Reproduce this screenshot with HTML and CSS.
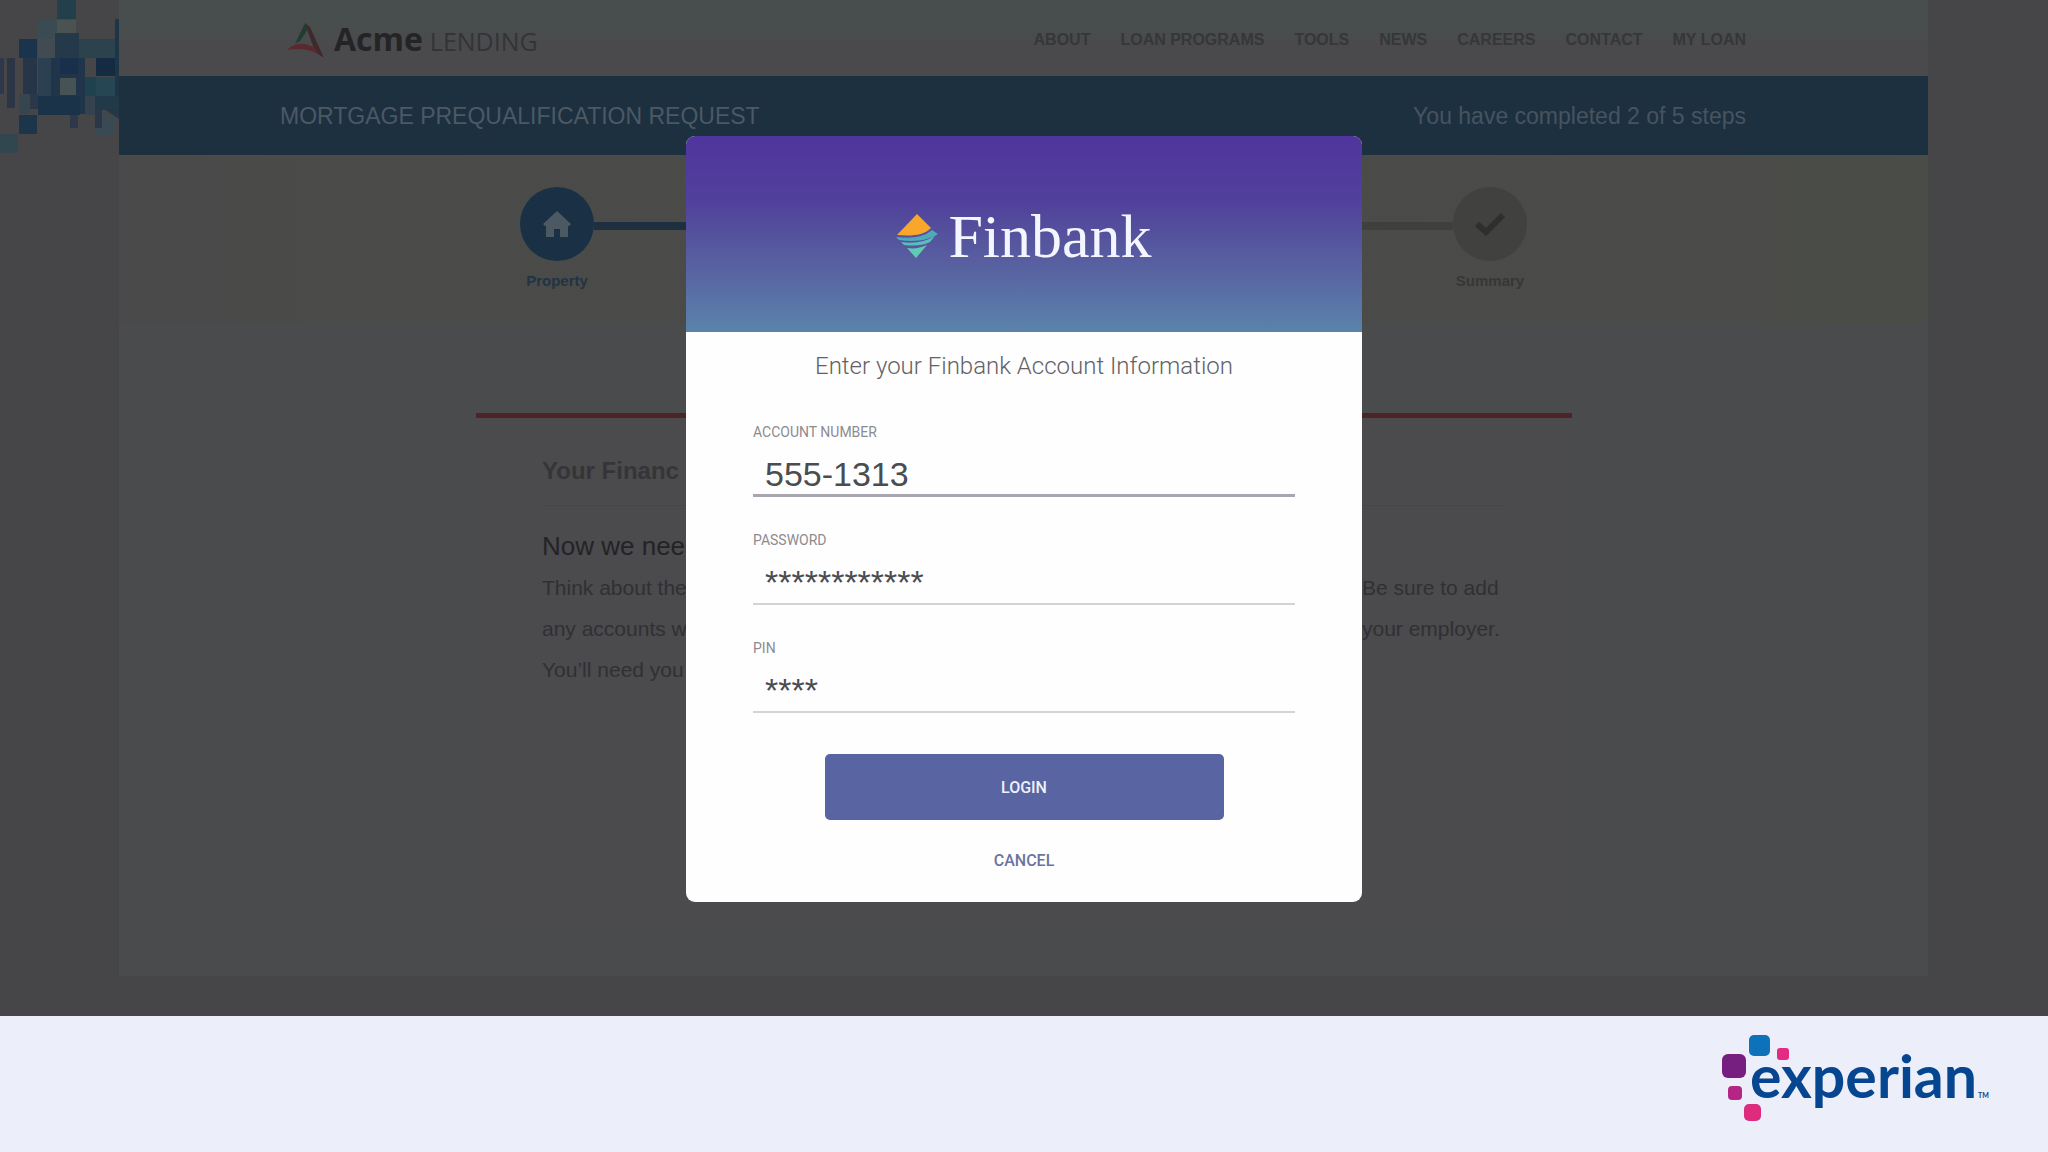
FILE: index.html
```html
<!DOCTYPE html>
<html lang="en">
<head>
    <meta charset="UTF-8">
    <meta name="viewport" content="width=device-width, initial-scale=1.0">
    <title>Acme Lending - Mortgage Prequalification</title>
    <link rel="stylesheet" href="styles.css">
</head>
<body>
    <main class="stage">
        <svg class="mosaic" viewBox="0 0 119 156" aria-hidden="true">
            <rect x="57" y="0" width="19" height="19" fill="#233f4b"/>
            <rect x="38" y="19" width="20" height="20" fill="#3a4c52"/>
            <rect x="38" y="39" width="17" height="19" fill="#414b51"/>
            <rect x="57" y="20" width="19" height="13" fill="#4b5352"/>
            <rect x="55" y="33" width="24" height="25" fill="#24394a"/>
            <rect x="79" y="39" width="36" height="19" fill="#2c434e"/>
            <rect x="115" y="19" width="4" height="77" fill="#1c3547"/>
            <rect x="19" y="39" width="18" height="19" fill="#1b344d"/>
            <rect x="0" y="58" width="4" height="36" fill="#30374a"/>
            <rect x="7" y="58" width="8" height="50" fill="#2c3546"/>
            <rect x="23" y="58" width="14" height="36" fill="#263648"/>
            <rect x="30" y="94" width="8" height="15" fill="#2a3849"/>
            <rect x="19" y="94" width="11" height="20" fill="#37464e"/>
            <rect x="38" y="58" width="13" height="38" fill="#2c4051"/>
            <rect x="51" y="58" width="34" height="56" fill="#20344a"/>
            <rect x="60" y="58" width="18" height="16" fill="#19304d"/>
            <rect x="60" y="78" width="16" height="17" fill="#465253"/>
            <rect x="38" y="96" width="42" height="19" fill="#1a3349"/>
            <rect x="96" y="58" width="19" height="18" fill="#142b42"/>
            <rect x="85" y="77" width="11" height="19" fill="#20424f"/>
            <rect x="96" y="77" width="19" height="19" fill="#264654"/>
            <rect x="85" y="96" width="10" height="19" fill="#34434f"/>
            <rect x="95" y="96" width="24" height="14" fill="#22394a"/>
            <rect x="95" y="110" width="7" height="18" fill="#2b3748"/>
            <path d="M102 110l7 7h7v12l-6 6H96v-7h6z" fill="#3a4a53"/>
            <path d="M104 109h15v10z" fill="#223847"/>
            <rect x="70" y="115" width="8" height="13" fill="#2d3849"/>
            <rect x="19" y="115" width="18" height="19" fill="#1c354a"/>
            <rect x="0" y="134" width="18" height="19" fill="#31464f"/>
        </svg>

        <div class="sheet">
            <header class="site-header">
                <a class="brand" href="#">
                    <svg class="brand-mark" viewBox="0 0 37 34" aria-hidden="true">
                        <path d="M18 0L8 21l5-3 8-12z" fill="#1f3d31"/>
                        <path d="M18 0l5 4 14 31-9-6z" fill="#40292c"/>
                        <path d="M0 27c7-7 17-9 29-1l2 5c-9-5-18-6-31-4z" fill="#5a2930"/>
                    </svg>
                    <span class="brand-name">Acme</span>
                    <span class="brand-sub">LENDING</span>
                </a>
                <nav class="site-nav">
                    <a href="#">ABOUT</a>
                    <a href="#">LOAN PROGRAMS</a>
                    <a href="#">TOOLS</a>
                    <a href="#">NEWS</a>
                    <a href="#">CAREERS</a>
                    <a href="#">CONTACT</a>
                    <a href="#">MY LOAN</a>
                </nav>
            </header>

            <div class="request-bar">
                <h1>MORTGAGE PREQUALIFICATION REQUEST</h1>
                <p>You have completed 2 of 5 steps</p>
            </div>

            <section class="progress">
                <div class="step done">
                    <span class="step-icon">
                        <svg width="28" height="28" viewBox="0 0 28 28" aria-hidden="true">
                            <path d="M14 1L0 14l2 2h1v11h8v-8h6v8h8V16h1l2-2z" fill="#4c5862"/>
                        </svg>
                    </span>
                    <span class="step-label">Property</span>
                </div>
                <span class="step-line done"></span>
                <span class="step-line"></span>
                <div class="step">
                    <span class="step-icon">
                        <svg width="32" height="24" viewBox="0 0 32 24" aria-hidden="true">
                            <path d="M3 12l9 8L29 3" fill="none" stroke="#2e2f2e" stroke-width="6"/>
                        </svg>
                    </span>
                    <span class="step-label">Summary</span>
                </div>
            </section>

            <section class="card">
                <h2>Your Financ</h2>
                <h3>Now we nee</h3>
                <div class="card-text">
                    <p>Think about the</p>
                    <p>Be sure to add</p>
                    <p>any accounts w</p>
                    <p>your employer.</p>
                    <p>You’ll need you</p>
                </div>
            </section>
        </div>

        <div class="overlay">
            <form class="modal" role="dialog" aria-labelledby="modal-title">
                <div class="modal-header">
                    <svg class="finbank-mark" viewBox="0 0 42 44" aria-hidden="true">
                        <path d="M21 0l14 14c-8 8-20 8-34 7z" fill="#f9a72b"/>
                        <path d="M0 23c16 2 28 0 36-7l6 4c-10 7-24 8-39 6z" fill="#4fa9bd"/>
                        <path d="M5 28c13 2 24 0 34-6l-5 6c-8 4-16 4-26 3z" fill="#5bbcbc"/>
                        <path d="M11 34c8 1 13 0 20-3L20 44z" fill="#5fcbb0"/>
                    </svg>
                    <span class="finbank-name">Finbank</span>
                </div>
                <div class="modal-body">
                    <h2 class="modal-title" id="modal-title">Enter your Finbank Account Information</h2>

                    <div class="field active">
                        <label for="account">ACCOUNT NUMBER</label>
                        <input type="text" id="account" value="555-1313">
                    </div>
                    <div class="field">
                        <label for="password">PASSWORD</label>
                        <input type="text" id="password" value="************">
                    </div>
                    <div class="field">
                        <label for="pin">PIN</label>
                        <input type="text" id="pin" value="****">
                    </div>

                    <button type="submit" class="login">LOGIN</button>
                    <button type="button" class="cancel">CANCEL</button>
                </div>
            </form>
        </div>
    </main>

    <footer class="page-footer">
        <svg class="experian" width="270" height="92" viewBox="0 0 270 92" role="img" aria-label="experian">
            <rect x="27" y="3" width="21" height="21" rx="5" fill="#0e72ba"/>
            <rect x="55" y="16" width="12" height="12" rx="3" fill="#e32b84"/>
            <rect x="0" y="22" width="24" height="24" rx="6" fill="#761f81"/>
            <rect x="6" y="54" width="14" height="14" rx="4" fill="#b52586"/>
            <rect x="22" y="72" width="17" height="17" rx="5" fill="#de2b80"/>
            <text class="experian-name" x="28" y="66">experian</text>
            <text class="experian-tm" x="256" y="66">TM</text>
        </svg>
    </footer>
</body>
</html>
```
FILE: styles.css
```css
* {
    box-sizing: border-box;
}
body {
    margin: 0;
    min-height: 100vh;
    display: flex;
    flex-direction: column;
    font-family: "Liberation Sans", Arial, sans-serif;
    background-color: #eceefa;
}
h1, h2, h3, p {
    margin: 0;
    font-weight: normal;
}
a {
    color: inherit;
    text-decoration: none;
}
.stage {
    position: relative;
    flex: 1;
    display: flex;
    align-items: flex-start;
    padding: 0 120px 40px 0;
    background-color: #464649;
}
.mosaic {
    width: 119px;
    height: 156px;
    flex: none;
}

/* Lending site behind the dialog */
.sheet {
    flex: 1;
    align-self: stretch;
    background-color: #4a4b4d;
}
.site-header {
    height: 76px;
    display: flex;
    align-items: center;
    justify-content: space-between;
    padding: 4px 182px 0 168px;
    background: linear-gradient(#474f4d 0, #484e4d 24px, #4a4a4c 44px);
}
.brand {
    display: flex;
    align-items: baseline;
    gap: 7px;
    font-family: "Open Sans", sans-serif;
    line-height: 40px;
}
.brand-mark {
    width: 37px;
    height: 34px;
    align-self: center;
    margin-right: 3px;
}
.brand-name {
    font-size: 32px;
    font-weight: bold;
    color: #242427;
}
.brand-sub {
    font-size: 25px;
    color: #343437;
}
.site-nav {
    display: flex;
    gap: 30px;
    font-size: 16px;
    font-weight: bold;
    color: #353738;
}
.request-bar {
    height: 79px;
    display: flex;
    align-items: center;
    justify-content: space-between;
    padding: 2px 182px 0 161px;
    background-color: #1d3040;
    font-size: 23px;
    color: #4b5965;
}
.request-bar h1 {
    font-size: 23px;
}
.request-bar p {
    color: #46545f;
}
.progress {
    height: 168px;
    display: flex;
    align-items: flex-start;
    justify-content: center;
    padding: 32px 400px 0;
    background: linear-gradient(90deg, #4a4a4a, #4a4c48);
}
.step {
    width: 76px;
    display: flex;
    flex-direction: column;
    align-items: center;
    gap: 10px;
    color: #363736;
}
.step.done {
    color: #1f3445;
}
.step-icon {
    width: 74px;
    height: 74px;
    display: flex;
    align-items: center;
    justify-content: center;
    border-radius: 50%;
    background-color: #414240;
}
.step.done .step-icon {
    background-color: #1a3145;
}
.step-label {
    font-size: 15px;
    font-weight: bold;
    line-height: 20px;
}
.step-line {
    flex: 1;
    height: 8px;
    margin: 35px -1px 0;
    background-color: #3f403e;
}
.step-line.done {
    background-color: #1e303f;
}
.card {
    min-height: 508px;
    margin: 90px 356px 0 357px;
    padding: 37px 66px;
    border-top: 5px solid #4d2328;
    background-color: #4b4a4c;
}
.card h2 {
    font-size: 24px;
    font-weight: bold;
    line-height: 32px;
    padding-bottom: 18px;
    border-bottom: 1px solid #464648;
    color: #353538;
}
.card h3 {
    font-size: 26px;
    line-height: 32px;
    padding: 24px 0 5px;
    color: #232327;
}
.card-text {
    display: grid;
    grid-template-columns: 1fr 144px;
    font-size: 21px;
    line-height: 41px;
    white-space: nowrap;
    color: #303034;
}

/* Bank login dialog */
.overlay {
    position: absolute;
    inset: 0;
    display: flex;
    align-items: flex-start;
    justify-content: center;
    padding-top: 136px;
}
.modal {
    width: 676px;
    border-radius: 9px;
    overflow: hidden;
    background-color: #fefefe;
    font-family: Roboto, sans-serif;
}
.modal-header {
    height: 196px;
    display: flex;
    align-items: center;
    justify-content: center;
    gap: 10px;
    padding-top: 4px;
    background: linear-gradient(#4f359c 0%, #51429b 35%, #575b9f 60%, #5a83aa 100%);
}
.finbank-mark {
    width: 42px;
    height: 44px;
}
.finbank-name {
    font-family: "Liberation Serif", serif;
    font-size: 62px;
    line-height: 70px;
    color: #f4f6ff;
}
.modal-body {
    display: flex;
    flex-direction: column;
    align-items: center;
    padding: 18px 67px 26px;
}
.modal-title {
    font-size: 24px;
    font-weight: 300;
    line-height: 32px;
    margin-bottom: 40px;
    color: #626266;
}
.field {
    width: 100%;
    display: flex;
    flex-direction: column;
    margin-bottom: 33px;
}
.field label {
    font-size: 14px;
    line-height: 20px;
    color: #8c8b90;
}
.field input {
    height: 55px;
    padding: 12px 12px 0;
    border: 0;
    border-bottom: 2px solid #d3d3d5;
    background: none;
    font-family: "Liberation Sans", Arial, sans-serif;
    font-size: 34px;
    color: #4b4c50;
    outline: none;
}
.field.active input {
    border-bottom: 3px solid #aaa6b0;
}
.login {
    width: 399px;
    height: 66px;
    margin-top: 8px;
    border: 0;
    border-radius: 5px;
    background-color: #5865a2;
    font-family: inherit;
    font-size: 16px;
    font-weight: 500;
    color: #eef0fb;
    cursor: pointer;
}
.cancel {
    margin-top: 25px;
    padding: 6px 12px;
    border: 0;
    background: none;
    font-family: inherit;
    font-size: 16px;
    font-weight: 500;
    color: #6c73a0;
    cursor: pointer;
}

.page-footer {
    height: 136px;
    display: flex;
    justify-content: flex-end;
    align-items: flex-start;
    padding: 16px 56px 0 0;
    background-color: #eceefa;
}
.experian-name {
    font-family: Lato, sans-serif;
    font-size: 59px;
    font-weight: bold;
    fill: #06458f;
}
.experian-tm {
    font-family: Lato, sans-serif;
    font-size: 7px;
    font-weight: bold;
    fill: #06458f;
}
```
